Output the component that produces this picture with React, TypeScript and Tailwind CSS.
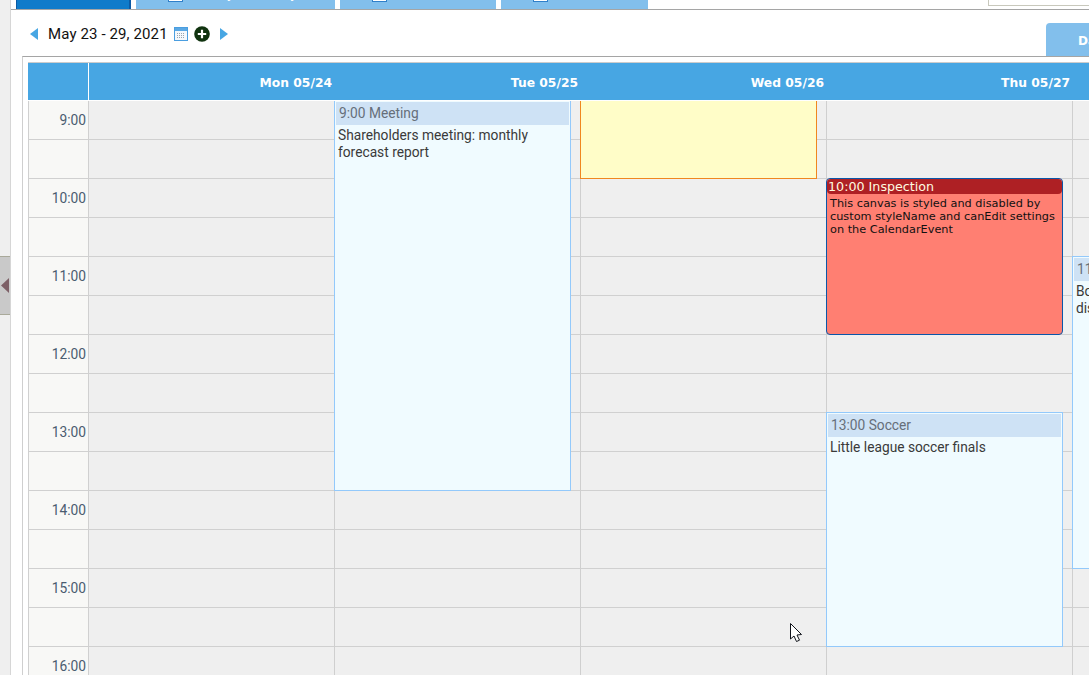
import React from "react";

const hours = [9, 10, 11, 12, 13, 14, 15, 16];
const days = ["Mon 05/24", "Tue 05/25", "Wed 05/26", "Thu 05/27", ""];

function TabIcon() {
  return <span className="block w-[15px] h-[16px] bg-white border border-[#2f7fc9]" />;
}

function CalendarEvent({ title, body, className }: { title: string; body: string; className: string }) {
  return (
    <div className={"absolute left-[-1px] w-[237px] box-border border border-[#93c9fb] bg-[#f0fbff] p-[1px] overflow-hidden " + className}>
      <div className="h-[23px] bg-[#cee2f5] pl-[3px] text-[13.75px] leading-[23px] text-[#666f7a] whitespace-nowrap">{title}</div>
      <div className="pl-[2px] pr-[2px] pt-[2px] text-[13.75px] leading-[17px] text-[#3a3a3a]">{body}</div>
    </div>
  );
}

export default function App() {
  return (
    <div className="relative w-[1089px] h-[675px] overflow-hidden bg-white flex font-['Roboto',sans-serif]">
      {/* collapsed side strip */}
      <div className="w-[11px] shrink-0 h-full bg-[#efefef] border-r border-[#d6d6d6] flex items-center pb-[105px]">
        <div className="w-[10px] h-[59px] bg-[#c9c9c9] border-y border-[#a9a99a] flex items-center">
          <svg width="8" height="15" viewBox="0 0 8 15" className="ml-[1px]">
            <path d="M8 0 L0 7.5 L8 15 Z" fill="#7d5f66" />
          </svg>
        </div>
      </div>

      <div className="flex-1 min-w-0 flex flex-col">
        {/* top tab strip */}
        <div className="h-[10px] shrink-0 border-b border-[#a5a5a5] flex pl-[5px] text-white text-[14px] font-medium leading-[14px]">
          <div className="w-[115px] h-[9px] bg-[#0f7bca] border-l border-r-2 border-[#0b5aa5] overflow-hidden flex items-end justify-center">
            <span className="mb-[9px] mr-[26px]">Q</span>
          </div>
          <div className="ml-[5px] w-[199px] h-[9px] bg-[#82bfec] overflow-hidden flex items-end pl-[32px] gap-[6px]">
            <div className="mb-[7px]"><TabIcon /></div>
            <span className="mb-[9px] whitespace-nowrap">Weekly / Monthly</span>
          </div>
          <div className="ml-[5px] w-[156px] h-[9px] bg-[#82bfec] overflow-hidden flex items-end pl-[32px]">
            <div className="mb-[7px]"><TabIcon /></div>
          </div>
          <div className="ml-[5px] w-[147px] h-[9px] bg-[#82bfec] overflow-hidden flex items-end pl-[32px]">
            <div className="mb-[7px]"><TabIcon /></div>
          </div>
          <div className="ml-auto w-[101px] h-[6px] bg-white border-l border-b border-[#c8c8bc]" />
        </div>

        {/* date toolbar */}
        <div className="ml-[11px] h-[46px] shrink-0 flex items-start justify-between">
          <div className="flex items-center h-[28px] mt-[10px] pl-[8px]">
            <svg width="8" height="12" viewBox="0 0 8 12"><path d="M8 0 L0 6 L8 12 Z" fill="#47a6e3" /></svg>
            <span className="ml-[10px] w-[120px] text-[15px] tracking-[0.12px] text-[#111111] whitespace-nowrap">May 23 - 29, 2021</span>
            <svg width="14" height="14" viewBox="0 0 14 14" className="ml-[6px]">
              <rect x="0.5" y="0.5" width="13" height="13" fill="#f4f8fc" stroke="#4a9ee0" />
              <rect x="1" y="1" width="12" height="3" fill="#5aa8e4" />
              <path d="M3 6.5h8M3 8.5h8M3 10.5h8" stroke="#9aa4ad" strokeWidth="1" strokeDasharray="1 1" />
            </svg>
            <svg width="16" height="16" viewBox="0 0 16 16" className="ml-[6px]">
              <circle cx="8" cy="8" r="7.8" fill="#10330f" />
              <path d="M8 3.8v8.4M3.8 8h8.4" stroke="#ffffff" strokeWidth="2.2" />
            </svg>
            <svg width="8" height="12" viewBox="0 0 8 12" className="ml-[10px]"><path d="M0 0 L8 6 L0 12 Z" fill="#47a6e3" /></svg>
          </div>
          <div className="mt-[13px] w-[43px] h-[33px] bg-[#82bfec] rounded-tl-[4px] pl-[32px] pt-[11px] text-white font-bold text-[12px] leading-[14px] font-['DejaVu_Sans',sans-serif] overflow-hidden whitespace-nowrap">
            Day
          </div>
        </div>

        {/* calendar pane */}
        <div className="ml-[11px] flex-1 min-h-0 border-l border-t border-l-[#cfcfcf] border-t-[#a5a5a5] pl-[5px] pt-[5px] overflow-hidden">
          <div className="h-full border-t border-[#cccccc] flex flex-col overflow-hidden">
            {/* header */}
            <div className="h-[38px] shrink-0 bg-[#47a6e3] border-b border-white flex font-['DejaVu_Sans',sans-serif] text-[12.3px] font-bold text-white">
              <div className="w-[61px] shrink-0 border-r border-white" />
              {days.map((d, i) => (
                <div key={i} className="w-[246px] shrink-0 pr-[3px] text-right leading-[41px] whitespace-nowrap">{d}</div>
              ))}
            </div>

            {/* body */}
            <div className="flex-1 min-h-0 flex overflow-hidden">
              <div className="w-[61px] shrink-0 bg-[#f8f8f6] border-x border-[#d0d0d0]">
                {hours.map((h) => (
                  <React.Fragment key={h}>
                    <div className="h-[39px] border-b border-[#d0d0d0] flex items-center justify-end pr-[2px] text-[13.75px] text-[#4a5c70]">{h}:00</div>
                    <div className="h-[39px] border-b border-[#d0d0d0]" />
                  </React.Fragment>
                ))}
              </div>
              {days.map((_, c) => (
                <div key={c} className="relative w-[246px] shrink-0 bg-[#efefef] border-r border-[#cfcfcf]">
                  {hours.map((h) => (
                    <React.Fragment key={h}>
                      <div className="h-[39px] border-b border-[#d0d0d0]" />
                      <div className="h-[39px] border-b border-[#d0d0d0]" />
                    </React.Fragment>
                  ))}
                  {c === 1 && (
                    <CalendarEvent
                      className="top-[-1px] h-[391px]"
                      title="9:00 Meeting"
                      body="Shareholders meeting: monthly forecast report"
                    />
                  )}
                  {c === 2 && (
                    <div className="absolute left-[-1px] top-[-40px] w-[237px] h-[118px] box-border border border-[#f0871f] bg-[#fffdc8]" />
                  )}
                  {c === 3 && (
                    <>
                      <div className="absolute left-[-1px] top-[77px] w-[237px] h-[157px] box-border border border-[#0b56a8] rounded-[4px] bg-[#ff7f72] overflow-hidden font-['DejaVu_Sans',sans-serif]">
                        <div className="h-[15px] bg-[#ae2024] rounded-[4px] pl-[1px] text-[12.7px] leading-[15px] text-[#fffbe0] whitespace-nowrap">10:00 Inspection</div>
                        <div className="pl-[3px] pr-[2px] pt-[3px] text-[11.3px] leading-[13px] text-[#111111]">
                          This canvas is styled and disabled by custom styleName and canEdit settings on the CalendarEvent
                        </div>
                      </div>
                      <CalendarEvent
                        className="top-[311px] h-[235px]"
                        title="13:00 Soccer"
                        body="Little league soccer finals"
                      />
                    </>
                  )}
                  {c === 4 && (
                    <CalendarEvent
                      className="top-[155px] h-[313px]"
                      title="11:00 Board"
                      body="Board of directors meeting: discussion of next month"
                    />
                  )}
                </div>
              ))}
            </div>
          </div>
        </div>
      </div>

      {/* mouse cursor */}
      <svg width="14" height="20" viewBox="0 0 14 20" className="absolute left-[790px] top-[623px]">
        <path d="M0.5 0.5 L0.5 16 L4 13 L6.5 18.5 L9.5 17.2 L7 12 L11.5 11.5 Z" fill="#ffffff" stroke="#10131a" strokeWidth="1" />
      </svg>
    </div>
  );
}
